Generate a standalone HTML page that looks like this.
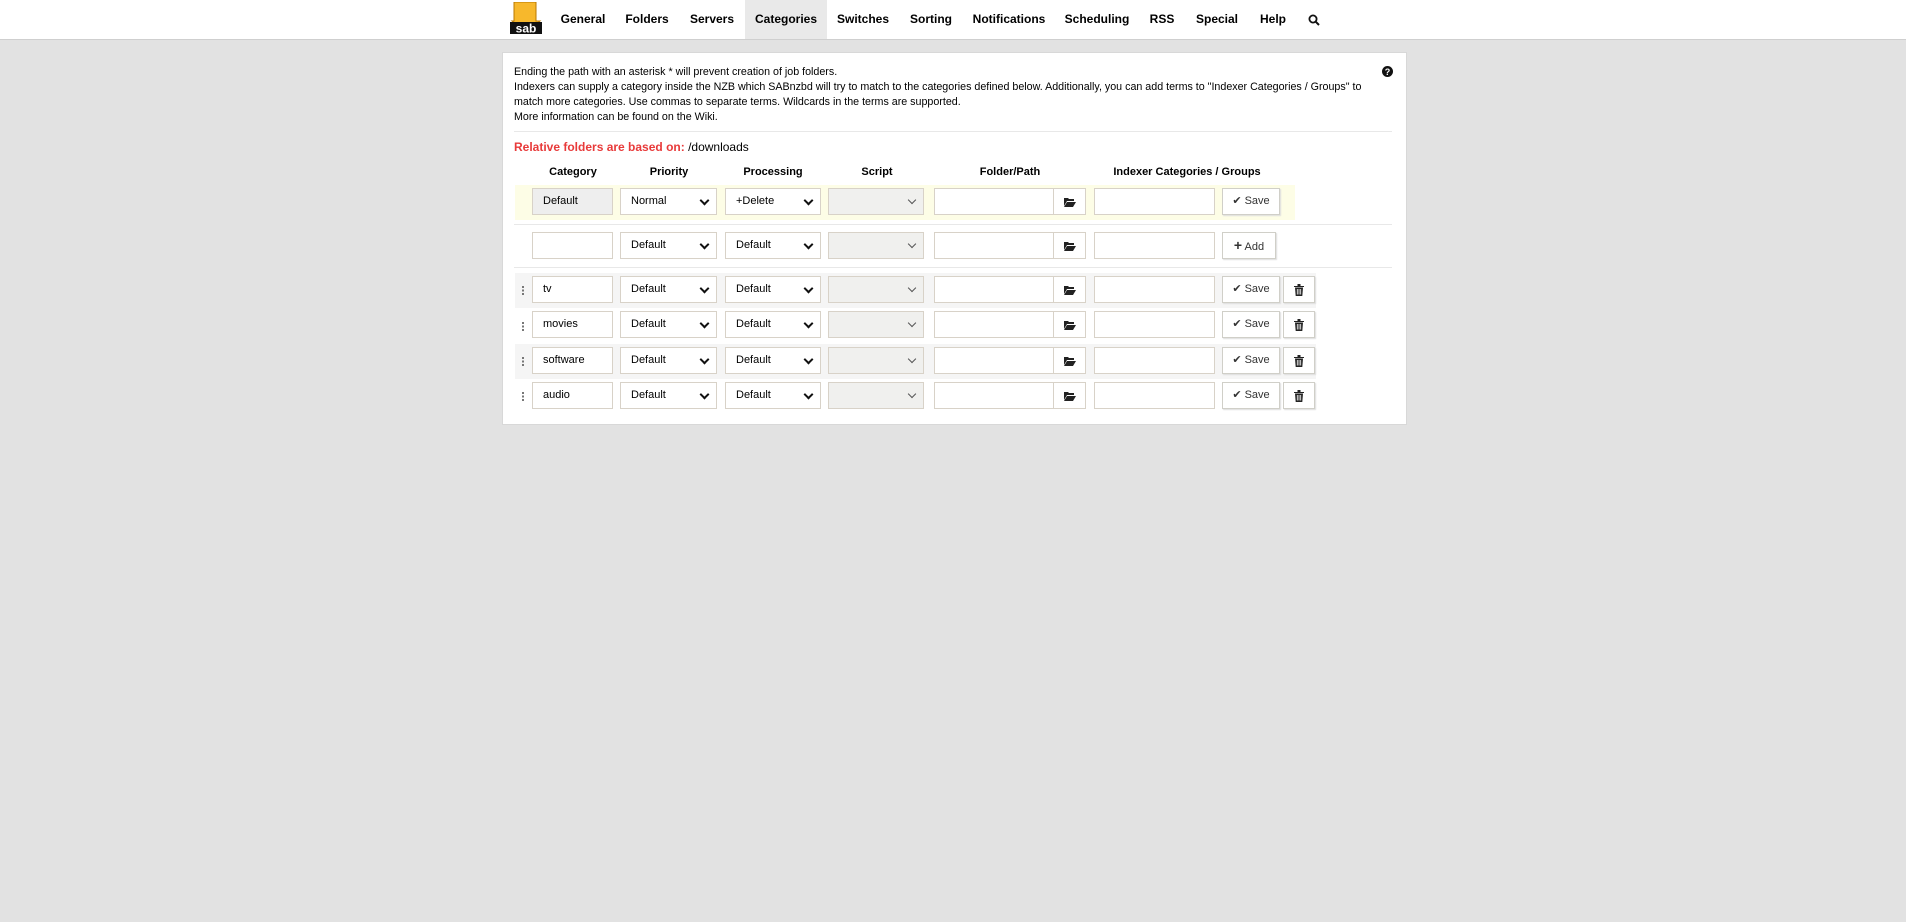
<!DOCTYPE html>
<html><head><meta charset="utf-8"><style>
*{box-sizing:border-box;margin:0;padding:0}
body{width:1911px;height:922px;background:#e2e2e2;font-family:"Liberation Sans",Arial,sans-serif;position:relative;overflow:hidden;color:#000}
.abs{position:absolute}
#nav{left:0;top:0;width:1906px;height:40px;background:#fff;border-bottom:1px solid #cfcfcf}
#strip{left:1906px;top:0;width:5px;height:922px;background:#fff}
.ni{position:absolute;top:0;height:39px;line-height:39px;font-size:12px;font-weight:bold;transform:translateX(-50%);white-space:nowrap}
#panel{left:502px;top:52px;width:905px;height:373px;background:#fff;border:1px solid #d8d8d8}
.t{font-size:10.7px;line-height:15px;left:514px;white-space:nowrap}
.hr{height:1px;background:#e8e8e8}
.h{font-size:11px;font-weight:bold;top:166px;transform:translateX(-50%);white-space:nowrap}
.in{position:absolute;height:27px;border:1px solid #d8d2c8;background:#fff;font-size:11px;line-height:25px;padding-left:10px}
.sel::after{content:"";position:absolute;right:8px;top:8px;width:5px;height:5px;border-right:2px solid #111;border-bottom:2px solid #111;transform:rotate(45deg)}
.dis{background:#f0f0ee}
.dis::after{border-color:#555;border-width:1.5px}
.fb{position:absolute;height:27px;width:33px;border:1px solid #d8d2c8;background:#fff}
.btn{position:absolute;height:27px;border:1px solid #d0cfc8;background:#fff;box-shadow:1px 1px 1px #ddd;font-size:11px;line-height:25px;text-align:center;color:#333}
.band{position:absolute;left:515px;width:801px;height:35px;background:#f5f5f5}
.drag{position:absolute;left:522px;width:2px;height:9px;background:repeating-linear-gradient(#777 0 2px,transparent 2px 3.5px)}
</style></head><body>
<div id="nav" class="abs"></div>
<div id="strip" class="abs"></div>
<svg class="abs" style="left:509px;top:2px" width="34" height="34" viewBox="0 0 34 34">
<path d="M5 0h22v19h4l-14 12L3 19h2z" fill="#f7b82c" stroke="#b87800" stroke-width="1"/>
<rect x="1" y="20" width="32" height="12" fill="#111"/>
<text x="17" y="30.5" font-family="Liberation Sans" font-weight="bold" font-size="12" fill="#fff" text-anchor="middle">sab</text>
</svg>
<div class="abs" style="left:745px;top:0;width:82px;height:39px;background:#e9e9e9"></div>
<span class="ni" style="left:583px">General</span>
<span class="ni" style="left:647px">Folders</span>
<span class="ni" style="left:712px">Servers</span>
<span class="ni" style="left:786px">Categories</span>
<span class="ni" style="left:863px">Switches</span>
<span class="ni" style="left:931px">Sorting</span>
<span class="ni" style="left:1009px">Notifications</span>
<span class="ni" style="left:1097px">Scheduling</span>
<span class="ni" style="left:1162px">RSS</span>
<span class="ni" style="left:1217px">Special</span>
<span class="ni" style="left:1273px">Help</span>
<svg class="abs" style="left:1308px;top:14px" width="12" height="12" viewBox="0 0 12 12"><circle cx="5" cy="5" r="3.6" fill="none" stroke="#111" stroke-width="1.8"/><path d="M7.6 7.6L11 11" stroke="#111" stroke-width="2"/></svg>

<div id="panel" class="abs"></div>
<div class="abs t" style="top:65px">Ending the path with an asterisk * will prevent creation of job folders.</div>
<div class="abs t" style="top:80px">Indexers can supply a category inside the NZB which SABnzbd will try to match to the categories defined below. Additionally, you can add terms to "Indexer Categories / Groups" to</div>
<div class="abs t" style="top:95px">match more categories. Use commas to separate terms. Wildcards in the terms are supported.</div>
<div class="abs t" style="top:110px">More information can be found on the Wiki.</div>
<svg class="abs" style="left:1382px;top:66px" width="11" height="11" viewBox="0 0 11 11"><circle cx="5.5" cy="5.5" r="5.5" fill="#111"/><text x="5.5" y="9" font-family="Liberation Sans" font-weight="bold" font-size="9" fill="#fff" text-anchor="middle">?</text></svg>
<div class="abs hr" style="left:514px;top:131px;width:878px"></div>
<div class="abs" style="left:514px;top:140px;font-size:12px"><b style="color:#e83a3a">Relative folders are based on:</b> /downloads</div>

<span class="abs h" style="left:573px">Category</span>
<span class="abs h" style="left:669px">Priority</span>
<span class="abs h" style="left:773px">Processing</span>
<span class="abs h" style="left:877px">Script</span>
<span class="abs h" style="left:1010px">Folder/Path</span>
<span class="abs h" style="left:1187px">Indexer Categories / Groups</span>

<div class="abs" style="left:515px;top:185px;width:780px;height:35px;background:#fdfde6"></div>
<div class="abs hr" style="left:514px;top:224px;width:878px"></div>
<div class="abs hr" style="left:514px;top:267px;width:878px"></div>
<div class="band" style="top:273px"></div>
<div class="band" style="top:344px"></div>

<div class="in" style="left:532px;top:188px;width:81px;background:#eee">Default</div>
<div class="in sel" style="left:620px;top:188px;width:97px">Normal</div>
<div class="in sel" style="left:725px;top:188px;width:96px">+Delete</div>
<div class="in sel dis" style="left:828px;top:188px;width:96px"></div>
<div class="in" style="left:934px;top:188px;width:120px"></div>
<div class="fb" style="left:1053px;top:188px"></div>
<div class="in" style="left:1094px;top:188px;width:121px"></div>
<div class="btn" style="left:1222px;top:188px;width:58px">✔ Save</div>

<div class="in" style="left:532px;top:232px;width:81px"></div>
<div class="in sel" style="left:620px;top:232px;width:97px">Default</div>
<div class="in sel" style="left:725px;top:232px;width:96px">Default</div>
<div class="in sel dis" style="left:828px;top:232px;width:96px"></div>
<div class="in" style="left:934px;top:232px;width:120px"></div>
<div class="fb" style="left:1053px;top:232px"></div>
<div class="in" style="left:1094px;top:232px;width:121px"></div>
<div class="btn" style="left:1222px;top:232px;width:54px"><b style="font-size:14px">+</b> Add</div>

<div class="drag" style="top:286px"></div>
<div class="in" style="left:532px;top:276px;width:81px">tv</div>
<div class="in sel" style="left:620px;top:276px;width:97px">Default</div>
<div class="in sel" style="left:725px;top:276px;width:96px">Default</div>
<div class="in sel dis" style="left:828px;top:276px;width:96px"></div>
<div class="in" style="left:934px;top:276px;width:120px"></div>
<div class="fb" style="left:1053px;top:276px"></div>
<div class="in" style="left:1094px;top:276px;width:121px"></div>
<div class="btn" style="left:1222px;top:276px;width:58px">✔ Save</div>
<div class="btn" style="left:1283px;top:276px;width:32px"></div>

<div class="drag" style="top:322px"></div>
<div class="in" style="left:532px;top:311px;width:81px">movies</div>
<div class="in sel" style="left:620px;top:311px;width:97px">Default</div>
<div class="in sel" style="left:725px;top:311px;width:96px">Default</div>
<div class="in sel dis" style="left:828px;top:311px;width:96px"></div>
<div class="in" style="left:934px;top:311px;width:120px"></div>
<div class="fb" style="left:1053px;top:311px"></div>
<div class="in" style="left:1094px;top:311px;width:121px"></div>
<div class="btn" style="left:1222px;top:311px;width:58px">✔ Save</div>
<div class="btn" style="left:1283px;top:311px;width:32px"></div>

<div class="drag" style="top:357px"></div>
<div class="in" style="left:532px;top:347px;width:81px">software</div>
<div class="in sel" style="left:620px;top:347px;width:97px">Default</div>
<div class="in sel" style="left:725px;top:347px;width:96px">Default</div>
<div class="in sel dis" style="left:828px;top:347px;width:96px"></div>
<div class="in" style="left:934px;top:347px;width:120px"></div>
<div class="fb" style="left:1053px;top:347px"></div>
<div class="in" style="left:1094px;top:347px;width:121px"></div>
<div class="btn" style="left:1222px;top:347px;width:58px">✔ Save</div>
<div class="btn" style="left:1283px;top:347px;width:32px"></div>

<div class="drag" style="top:392px"></div>
<div class="in" style="left:532px;top:382px;width:81px">audio</div>
<div class="in sel" style="left:620px;top:382px;width:97px">Default</div>
<div class="in sel" style="left:725px;top:382px;width:96px">Default</div>
<div class="in sel dis" style="left:828px;top:382px;width:96px"></div>
<div class="in" style="left:934px;top:382px;width:120px"></div>
<div class="fb" style="left:1053px;top:382px"></div>
<div class="in" style="left:1094px;top:382px;width:121px"></div>
<div class="btn" style="left:1222px;top:382px;width:58px">✔ Save</div>
<div class="btn" style="left:1283px;top:382px;width:32px"></div>

<svg width="0" height="0" style="position:absolute"><defs>
<symbol id="fo" viewBox="0 0 12 10"><path d="M0 1h4l1 1h5v2H3L0 9z M3 5h9l-3 5H0z" fill="#222"/></symbol>
<symbol id="tr" viewBox="0 0 10 12"><path d="M0 2h10v1H0z M3.5 0h3v2h-3z M1 3.5h8L8.3 12H1.7z" fill="#222"/><path d="M3.3 5v5.5M5 5v5.5M6.7 5v5.5" stroke="#fff" stroke-width="0.8"/></symbol>
</defs></svg>
<svg class="abs" style="left:1064px;top:197px" width="12" height="10"><use href="#fo"/></svg>
<svg class="abs" style="left:1064px;top:241px" width="12" height="10"><use href="#fo"/></svg>
<svg class="abs" style="left:1064px;top:285px" width="12" height="10"><use href="#fo"/></svg>
<svg class="abs" style="left:1064px;top:320px" width="12" height="10"><use href="#fo"/></svg>
<svg class="abs" style="left:1064px;top:356px" width="12" height="10"><use href="#fo"/></svg>
<svg class="abs" style="left:1064px;top:391px" width="12" height="10"><use href="#fo"/></svg>
<svg class="abs" style="left:1294px;top:284px" width="10" height="12"><use href="#tr"/></svg>
<svg class="abs" style="left:1294px;top:319px" width="10" height="12"><use href="#tr"/></svg>
<svg class="abs" style="left:1294px;top:355px" width="10" height="12"><use href="#tr"/></svg>
<svg class="abs" style="left:1294px;top:390px" width="10" height="12"><use href="#tr"/></svg>
</body></html>
